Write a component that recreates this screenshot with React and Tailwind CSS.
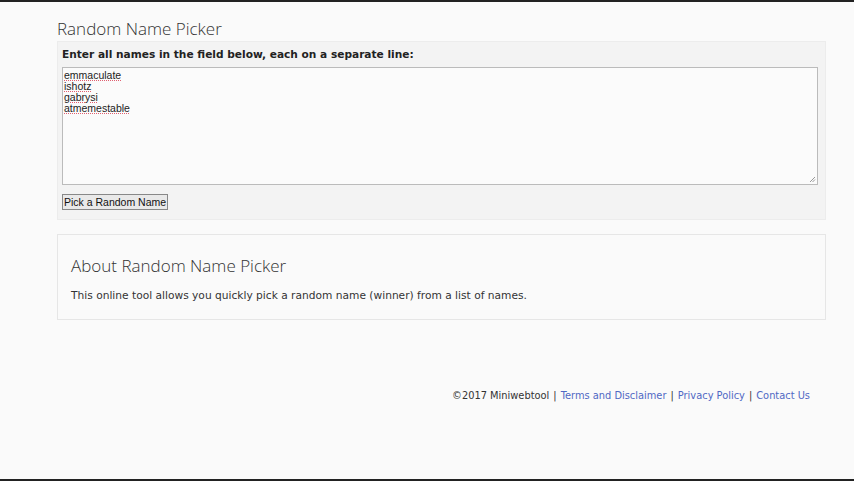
import React from 'react';

const names = ['emmaculate', 'ishotz', 'gabrysi', 'atmemestable'];

const App = () => {
    return (
        <div className="w-[854px] h-[481px] bg-[#fafafa] border-t-2 border-b-2 border-[#222] flex flex-col overflow-hidden">
            <div className="pl-[57px] pr-[28px] pt-[16px]">
                <h1 className="text-[17px] leading-[22px] text-[#333] font-['Open_Sans',sans-serif] font-light">
                    Random Name Picker
                </h1>

                <div className="mt-[1px] h-[179px] bg-[#f3f3f3] border border-[#ececec] px-[4px] pt-[4px]">
                    <div className="text-[10.6px] leading-[16px] font-bold text-[#222] font-['DejaVu_Sans',sans-serif]">
                        Enter all names in the field below, each on a separate line:
                    </div>
                    <div className="mt-[5px] w-[756px] h-[118px] bg-[#fbfbfb] border border-[#bbb] relative px-[1px] pt-[2px]">
                        {names.map((n) => (
                            <div key={n} className="text-[10.5px] leading-[11px] text-[#222] font-['Liberation_Sans',sans-serif]">
                                <span className="underline decoration-dotted decoration-[#e06070] decoration-1 underline-offset-1">{n}</span>
                            </div>
                        ))}
                        <svg className="absolute right-[1px] bottom-[1px]" width="6" height="6" viewBox="0 0 6 6">
                            <path d="M5 0 L0 5 M5 2.5 L2.5 5" stroke="#999" strokeWidth="1" />
                        </svg>
                    </div>
                    <button className="mt-[9px] h-[16px] px-[1px] bg-[#e9e9e9] border border-[#888] text-[10.5px] leading-[13px] text-[#111] font-['Liberation_Sans',sans-serif]">
                        Pick a Random Name
                    </button>
                </div>

                <div className="mt-[14px] h-[86px] bg-[#fafafa] border border-[#e6e6e6] px-[13px] pt-[20px]">
                    <h2 className="text-[17px] leading-[22px] text-[#333] font-['Open_Sans',sans-serif] font-light">
                        About Random Name Picker
                    </h2>
                    <p className="mt-[12px] text-[10.65px] leading-[14px] text-[#333] font-['DejaVu_Sans',sans-serif]">
                        This online tool allows you quickly pick a random name (winner) from a list of names.
                    </p>
                </div>
            </div>

            <div className="mt-[69px] pr-[44px] flex justify-end text-[9.85px] leading-[14px] font-['DejaVu_Sans',sans-serif] text-[#333]">
                <span>©2017 Miniwebtool</span>
                <span className="px-[4px]">|</span>
                <a href="#" className="text-[#5068c4]">Terms and Disclaimer</a>
                <span className="px-[4px]">|</span>
                <a href="#" className="text-[#5068c4]">Privacy Policy</a>
                <span className="px-[4px]">|</span>
                <a href="#" className="text-[#5068c4]">Contact Us</a>
            </div>
        </div>
    );
};

export default App;
